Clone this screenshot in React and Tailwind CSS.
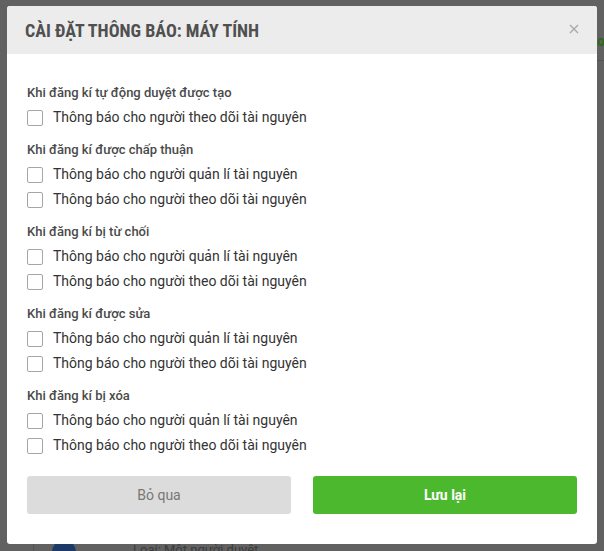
const sections = [
  { title: "Khi đăng kí tự động duyệt được tạo", items: ["Thông báo cho người theo dõi tài nguyên"] },
  {
    title: "Khi đăng kí được chấp thuận",
    items: ["Thông báo cho người quản lí tài nguyên", "Thông báo cho người theo dõi tài nguyên"],
  },
  {
    title: "Khi đăng kí bị từ chối",
    items: ["Thông báo cho người quản lí tài nguyên", "Thông báo cho người theo dõi tài nguyên"],
  },
  {
    title: "Khi đăng kí được sửa",
    items: ["Thông báo cho người quản lí tài nguyên", "Thông báo cho người theo dõi tài nguyên"],
  },
  {
    title: "Khi đăng kí bị xóa",
    items: ["Thông báo cho người quản lí tài nguyên", "Thông báo cho người theo dõi tài nguyên"],
  },
];

export default function App() {
  return (
    <div className="relative h-[551px] w-[604px] overflow-hidden bg-[#616161] font-['Roboto',sans-serif]">
      {/* page behind the overlay */}
      <div className="absolute left-[33px] top-[520px] h-[40px] w-px bg-[#555]" />
      <div className="absolute left-[52px] top-[540px] h-[24px] w-[24px] rounded-full bg-[#1d3a66]" />
      <div className="absolute left-[133px] top-[540px] text-[13px] text-[#3c3c3c]">Loại: Một người duyệt</div>
      <div className="absolute left-[597px] top-[31px] text-[14px] font-bold text-[#2a6a1a]">o</div>
      <div className="absolute left-[597px] top-[60px] h-px w-[10px] bg-[#555]" />

      <div className="relative ml-[7px] mt-[6px] w-[590px] overflow-hidden rounded-[3px] bg-white">
        <div className="flex h-[48px] items-center justify-between bg-[#ececec] pl-[18px] pr-[18px]">
          <h2 className="font-['Roboto_Condensed','Liberation_Sans_Narrow',sans-serif] text-[18px] font-bold text-[#505050]">
            CÀI ĐẶT THÔNG BÁO: MÁY TÍNH
          </h2>
          <svg width="10" height="10" viewBox="0 0 10 10" className="mt-[-2px]">
            <path d="M1 1L9 9M9 1L1 9" stroke="#a9a9a9" strokeWidth="1.4" />
          </svg>
        </div>

        <div className="px-5 pb-[30px] pt-[30px]">
          <div className="flex flex-col gap-[11px]">
            {sections.map((s) => (
              <div key={s.title}>
                <div className="mb-[3px] h-[18px] text-[13px] font-medium leading-[18px] text-[#4a4a4a]">{s.title}</div>
                {s.items.map((item) => (
                  <label key={item} className="flex h-[25px] items-center gap-[10px]">
                    <span className="h-[16px] w-[16px] rounded-[2px] border border-[#a6a6a6] bg-white" />
                    <span className="text-[14px] text-[#333]">{item}</span>
                  </label>
                ))}
              </div>
            ))}
          </div>

          <div className="mt-[18px] grid grid-cols-2 gap-[22px]">
            <button className="h-[38px] rounded-[3px] bg-[#dcdcdc] text-[14px] text-[#777]">Bỏ qua</button>
            <button className="h-[38px] rounded-[3px] bg-[#4cb82e] text-[14px] font-bold text-white">Lưu lại</button>
          </div>
        </div>
      </div>
    </div>
  );
}
